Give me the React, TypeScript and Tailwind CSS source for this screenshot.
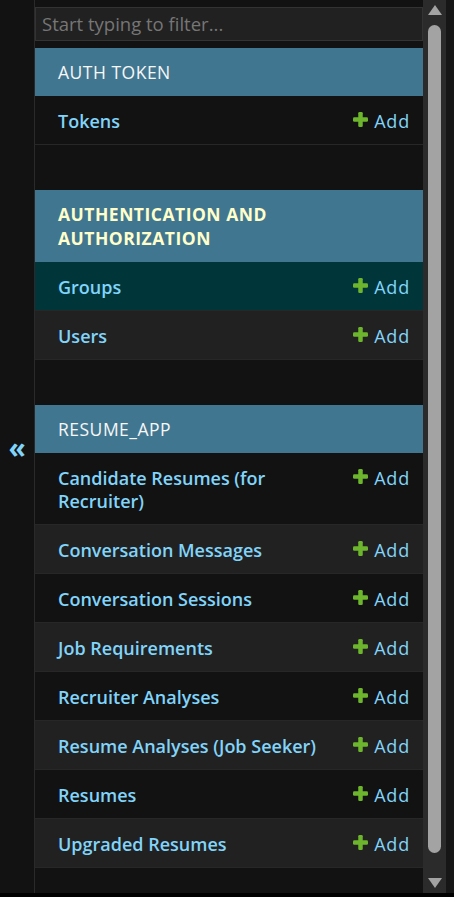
const sections = [
  {
    title: "AUTH TOKEN",
    current: false,
    models: [{ name: "Tokens" }],
  },
  {
    title: "AUTHENTICATION AND AUTHORIZATION",
    current: true,
    models: [{ name: "Groups", selected: true }, { name: "Users" }],
  },
  {
    title: "RESUME_APP",
    current: false,
    models: [
      { name: "Candidate Resumes (for Recruiter)" },
      { name: "Conversation Messages" },
      { name: "Conversation Sessions" },
      { name: "Job Requirements" },
      { name: "Recruiter Analyses" },
      { name: "Resume Analyses (Job Seeker)" },
      { name: "Resumes" },
      { name: "Upgraded Resumes" },
    ],
  },
];

function PlusIcon() {
  return (
    <svg width="15" height="15" viewBox="0 0 14 14" className="mt-[2px] shrink-0">
      <rect x="4.9" y="0" width="4.2" height="14" rx="1.2" fill="#6cb52c" />
      <rect x="0" y="4.9" width="14" height="4.2" rx="1.2" fill="#6cb52c" />
    </svg>
  );
}

function ModelRow({ name, selected, even }: { name: string; selected?: boolean; even: boolean }) {
  const bg = selected ? "bg-[#00363a]" : even ? "bg-[#212121]" : "bg-[#121212]";
  return (
    <div className={`flex items-start justify-between border-b border-[#272727] pt-[14px] pb-[11px] pl-[23px] pr-[13px] ${bg}`}>
      <span className="w-[280px] text-[18px] font-semibold leading-[23px] text-[#81d4fa]">{name}</span>
      <span className="flex items-start gap-[6px] text-[18px] leading-[23px] tracking-[0.8px] text-[#81d4fa]">
        <PlusIcon />
        Add
      </span>
    </div>
  );
}

export default function App() {
  return (
    <div className="flex h-[897px] w-[454px] flex-col bg-black font-['Open_Sans',sans-serif]">
      <div className="flex h-[893px]">
        {/* collapse toggle */}
        <div className="flex w-[35px] items-center justify-center border-r border-[#2a2a2a] bg-[#121212]">
          <span className="text-[28px] font-bold leading-none text-[#81d4fa]">«</span>
        </div>

        {/* sidebar */}
        <nav className="flex w-[388px] flex-col bg-[#121212] pt-[7px]">
          <div className="h-[34px] border border-[#333333] bg-[#212121] pl-[6px] text-[18.5px] leading-[31px] text-[#767676]">
            Start typing to filter...
          </div>
          <div className="mt-[7px] flex flex-col gap-[45px]">
            {sections.map((s) => (
              <div key={s.title}>
                <div
                  className={`bg-[#417690] py-[12px] pl-[23px] pr-[100px] text-[17.5px] leading-[24px] tracking-[0.5px] ${
                    s.current ? "font-bold text-[#ffffcc]" : "text-[#f7f7f7]"
                  }`}
                >
                  {s.title}
                </div>
                {s.models.map((m, i) => (
                  <ModelRow key={m.name} name={m.name} selected={"selected" in m ? m.selected : false} even={i % 2 === 1} />
                ))}
              </div>
            ))}
          </div>
        </nav>

        {/* scrollbar */}
        <div className="flex w-[23px] flex-col items-center bg-[#2b2b2b] py-[5px]">
          <div className="h-0 w-0 border-x-[7px] border-b-[10px] border-x-transparent border-b-[#a3a3a3]" />
          <div className="mt-[10px] mb-[25px] w-[13px] flex-1 rounded-full bg-[#a3a3a3]" />
          <div className="h-0 w-0 border-x-[7px] border-t-[10px] border-x-transparent border-t-[#a3a3a3]" />
        </div>

        <div className="w-[8px] bg-[#161616]" />
      </div>
      <div className="h-[4px] bg-black" />
    </div>
  );
}
